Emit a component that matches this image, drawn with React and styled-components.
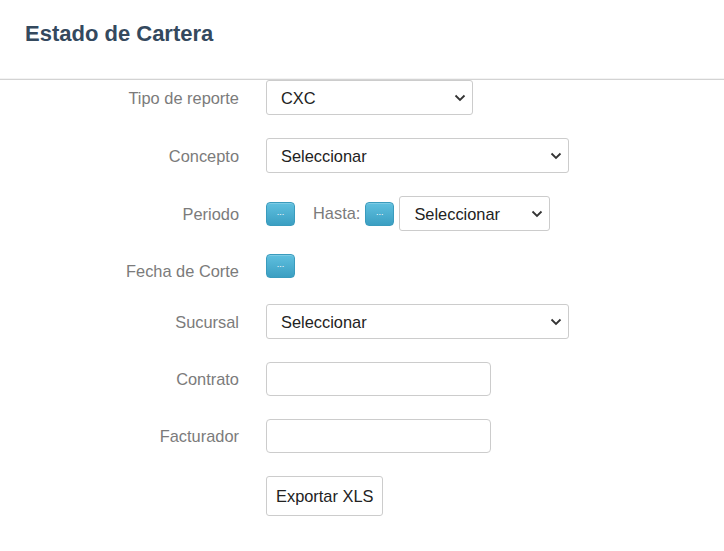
import React from "react";
import styled, { createGlobalStyle } from "styled-components";

const GlobalStyle = createGlobalStyle`
  html, body {
    margin: 0;
    padding: 0;
    background: #fff;
    font-family: "Liberation Sans", Arial, sans-serif;
  }
`;

const Page = styled.div`
  width: 724px;
`;

const Header = styled.header`
  height: 80px;
  padding: 23px 25px 0;
  box-sizing: border-box;
  border-bottom: 1px solid #d3d3d3;
  box-shadow: inset 0 -1px 0 #f3f3f3;
`;

const Title = styled.h1`
  margin: 0;
  font-size: 22px;
  line-height: 22px;
  font-weight: bold;
  color: #34495e;
`;

const Form = styled.form`
  display: flex;
  flex-direction: column;
`;

const Row = styled.div`
  display: flex;
  align-items: ${({ $top }) => ($top ? "flex-start" : "center")};
  min-height: 34px;
  margin-bottom: ${({ $gap }) => $gap || 23}px;
`;

const Label = styled.label`
  width: 239px;
  flex-shrink: 0;
  margin-right: 27px;
  text-align: right;
  font-size: 16.4px;
  line-height: 34px;
  color: #7b7b7b;
`;

const Controls = styled.div`
  display: flex;
  align-items: center;
`;

const SelectWrap = styled.div`
  position: relative;
  width: ${({ $w }) => $w}px;
  flex-shrink: 0;
`;

const Select = styled.select`
  display: block;
  width: 100%;
  height: 35px;
  box-sizing: border-box;
  padding: 0 30px 0 14px;
  border: 1px solid #ccc;
  border-radius: 3px;
  background: #fff;
  appearance: none;
  font-family: "Liberation Sans", Arial, sans-serif;
  font-size: 16.4px;
  color: #222;
  outline: none;
`;

const Chevron = styled.svg`
  position: absolute;
  right: 7px;
  top: 50%;
  width: 12px;
  height: 8px;
  margin-top: -4px;
  pointer-events: none;
`;

const Input = styled.input`
  width: 225px;
  height: 34px;
  box-sizing: border-box;
  border: 1px solid #ccc;
  border-radius: 4px;
  background: #fff;
  padding: 0 10px;
  font-size: 16px;
`;

const PickerButton = styled.button`
  width: 29px;
  height: 24px;
  padding: 0 0 3px;
  border: 1px solid #3a9bbd;
  border-radius: 4px;
  background: linear-gradient(#5fc0df, #3b9fc2);
  color: #fff;
  font-family: "Liberation Sans", Arial, sans-serif;
  font-size: 9px;
  line-height: 1;
  box-shadow: inset 0 1px 0 rgba(255, 255, 255, 0.2);
  flex-shrink: 0;
`;

const Hasta = styled.span`
  margin: 0 5px 0 18px;
  font-size: 16.4px;
  color: #7b7b7b;
`;

const Gap = styled.span`
  width: 5px;
`;

const ExportButton = styled.button`
  align-self: flex-start;
  margin-left: 266px;
  height: 40px;
  border: 1px solid #ccc;
  border-radius: 3px;
  background: #fff;
  padding: 0 9px;
  white-space: nowrap;
  font-family: "Liberation Sans", Arial, sans-serif;
  font-size: 16.4px;
  color: #222;
`;

function Dropdown({ width, children, ...rest }) {
  return (
    <SelectWrap $w={width}>
      <Select {...rest}>{children}</Select>
      <Chevron viewBox="0 0 12 8">
        <path d="M1.5 1.5 L6 6 L10.5 1.5" fill="none" stroke="#333" strokeWidth="1.8" />
      </Chevron>
    </SelectWrap>
  );
}

export default function App() {
  return (
    <Page>
      <GlobalStyle />
      <Header>
        <Title>Estado de Cartera</Title>
      </Header>
      <Form onSubmit={(e) => e.preventDefault()}>
        <Row>
          <Label>Tipo de reporte</Label>
          <Dropdown width={207} defaultValue="CXC">
            <option>CXC</option>
            <option>CXP</option>
          </Dropdown>
        </Row>
        <Row>
          <Label>Concepto</Label>
          <Dropdown width={303}>
            <option>Seleccionar</option>
          </Dropdown>
        </Row>
        <Row>
          <Label>Periodo</Label>
          <Controls>
            <PickerButton type="button">...</PickerButton>
            <Hasta>Hasta:</Hasta>
            <PickerButton type="button">...</PickerButton>
            <Gap />
            <Dropdown width={151}>
              <option>Seleccionar</option>
            </Dropdown>
          </Controls>
        </Row>
        <Row $top $gap={16}>
          <Label>Fecha de Corte</Label>
          <PickerButton type="button">...</PickerButton>
        </Row>
        <Row>
          <Label>Sucursal</Label>
          <Dropdown width={303}>
            <option>Seleccionar</option>
          </Dropdown>
        </Row>
        <Row>
          <Label>Contrato</Label>
          <Input type="text" />
        </Row>
        <Row>
          <Label>Facturador</Label>
          <Input type="text" />
        </Row>
        <ExportButton type="button">Exportar XLS</ExportButton>
      </Form>
    </Page>
  );
}
